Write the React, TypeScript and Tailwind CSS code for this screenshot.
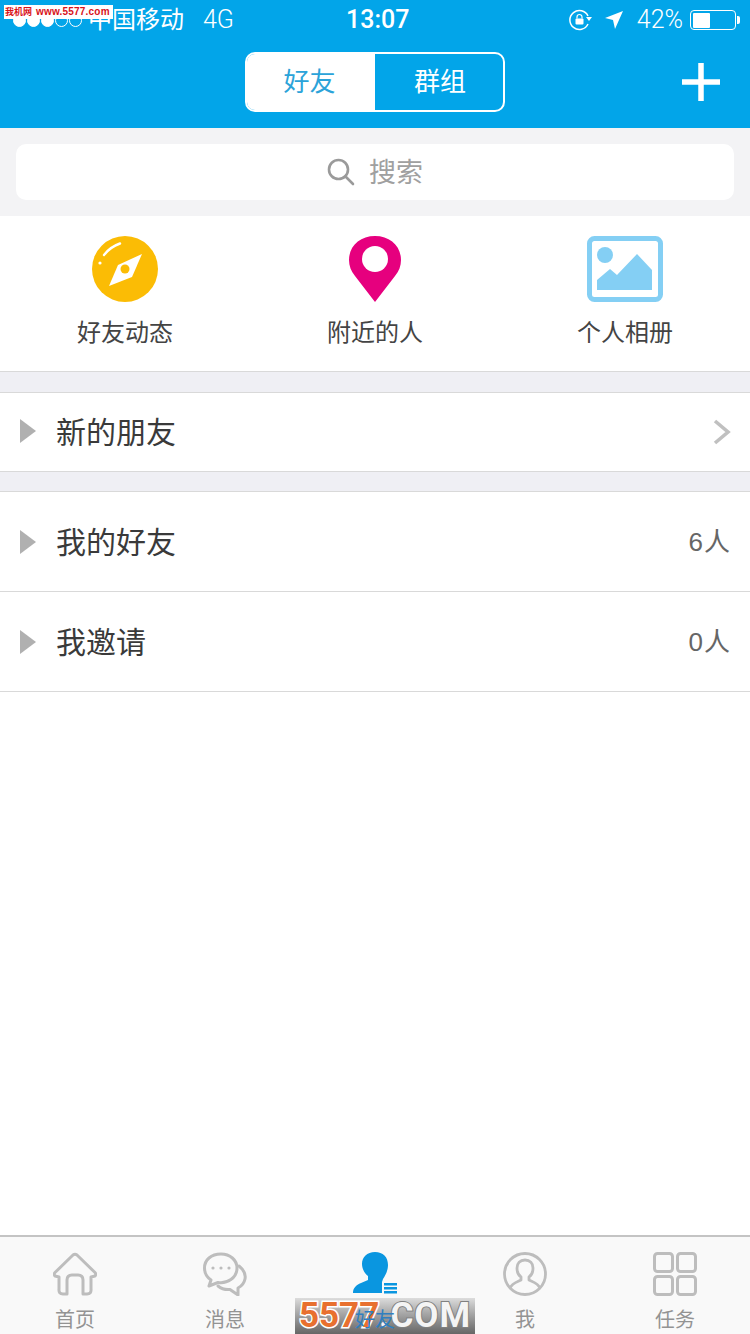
import React from 'react';

const sans = "font-['Liberation_Sans','Noto_Sans_CJK_SC',sans-serif]";
const latin = "font-['Roboto','Noto_Sans_CJK_SC',sans-serif]";

const Triangle = () => (
  <svg width="18" height="26" viewBox="0 0 18 26" className="mb-[2px] shrink-0">
    <path d="M1 1 L17 13 L1 25 Z" fill="#b0b0b0" />
  </svg>
);

const Chevron = () => (
  <svg width="18" height="26" viewBox="0 0 18 26">
    <path d="M2 2 L15 13 L2 24" fill="none" stroke="#c0c0c0" strokeWidth="3.6" />
  </svg>
);

const Compass = () => (
  <svg width="66" height="66" viewBox="0 0 66 66">
    <circle cx="33" cy="33" r="33" fill="#fbbc05" />
    <path d="M12 19 Q18 11 28 7.500" fill="none" stroke="#fff" strokeWidth="2.400" strokeLinecap="round" />
    <circle cx="8" cy="27" r="1.600" fill="#fff" />
    <path d="M50 18 L40 41 L17 50 L26 29 Z" fill="#fff" />
    <circle cx="33" cy="33" r="4.500" fill="#fbbc05" />
  </svg>
);

const Pin = () => (
  <svg width="52" height="66" viewBox="0 0 52 66">
    <path d="M26 0 C11 0 0 10 0 24 C0 30 2 35 6 40 L26 66 L46 40 C50 35 52 30 52 24 C52 10 41 0 26 0 Z" fill="#e6007e" />
    <circle cx="26" cy="23" r="13" fill="#fff" />
  </svg>
);

const Album = () => (
  <svg width="76" height="66" viewBox="0 0 76 66">
    <rect x="2.500" y="2.500" width="71" height="61" rx="5" fill="#fff" stroke="#84cff4" strokeWidth="5" />
    <circle cx="18" cy="19" r="8" fill="#84cff4" />
    <path d="M10 54 L10 44 L23 33 L30 39 L50 18 L65 34 L65 54 Z" fill="#84cff4" />
  </svg>
);

const HomeIcon = () => (
  <svg width="44" height="44" viewBox="0 0 44 44" fill="none" stroke="#bdbdbd" strokeWidth="3" strokeLinejoin="round" strokeLinecap="round">
    <path d="M10 42 Q5.500 42 6 37 L6 25 L2 24 Q0.500 22 2 20.500 L20 3 Q22 1.500 24 3 L42 20.500 Q43.500 22 42 24 L38 25 L38 37 Q38.500 42 34 42 L30 42 L30 28 Q30 23 25 23 L19 23 Q14 23 14 28 L14 42 Z" />
  </svg>
);

const ChatIcon = () => (
  <svg width="44" height="44" viewBox="0 0 44 44" fill="none" stroke="#bdbdbd" strokeWidth="3" strokeLinejoin="round" strokeLinecap="round">
    <path d="M18 2 C8 2 1.500 8 1.500 16 C1.500 22 5 26 8 28 L6 34 L15 30.500 C24 32 34 26 34 16 C34 8 27 2 18 2 Z" />
    <path d="M36 14 C41 18 43 22 42 27 C41 32 37 35 35 36 L35 43 L27 37.500 C22 38 18 36.500 15 34" />
    <circle cx="10" cy="16" r="1.600" fill="#bdbdbd" stroke="none" />
    <circle cx="18" cy="16" r="1.600" fill="#bdbdbd" stroke="none" />
    <circle cx="26" cy="16" r="1.600" fill="#bdbdbd" stroke="none" />
  </svg>
);

const FriendIcon = () => (
  <svg width="46" height="44" viewBox="0 0 46 44">
    <path d="M23 0 C31 0 36 5 36 13 C36 19 33 24 31 27 L30 30 V41 H1 C1 36 4 33 9 31 L16 28 L16 24 C12 21 10 16 10 12 C10 5 15 0 23 0 Z" fill="#0a96e0" />
    <rect x="32" y="31" width="13" height="2.500" fill="#0a96e0" />
    <rect x="32" y="35" width="13" height="2.500" fill="#0a96e0" />
    <rect x="32" y="39" width="13" height="2.500" fill="#0a96e0" />
  </svg>
);

const MeIcon = () => (
  <svg width="44" height="44" viewBox="0 0 44 44" fill="none" stroke="#bdbdbd" strokeWidth="2.800" strokeLinejoin="round">
    <circle cx="22" cy="22" r="20.500" />
    <path d="M7 36 C9 31 14 30 18 28 L18 25 C15 23 14 19 14 16 C14 11 17 8 22 8 C27 8 30 11 30 16 C30 19 29 23 26 25 L26 28 C30 30 35 31 37 36" />
  </svg>
);

const GridIcon = () => (
  <svg width="44" height="44" viewBox="0 0 44 44" fill="none" stroke="#bdbdbd" strokeWidth="3">
    <rect x="1.500" y="1.500" width="18" height="18" rx="3" />
    <rect x="24.500" y="1.500" width="18" height="18" rx="3" />
    <rect x="1.500" y="24.500" width="18" height="18" rx="3" />
    <rect x="24.500" y="24.500" width="18" height="18" rx="3" />
  </svg>
);

const StatusBar = () => (
  <div className={`relative flex h-10 items-center justify-between text-white ${latin}`}>
    <div className="flex items-center pl-[13px]">
      <div className="flex gap-[1px]">
        {[1, 1, 1, 0, 0].map((on, i) => (
          <span key={i} className={`h-[13px] w-[13px] rounded-full border border-white ${on ? 'bg-white' : ''}`} />
        ))}
      </div>
      <span className="ml-[6px] text-[24px]">中国移动</span>
      <span className="ml-[19px] text-[25px] font-light">4G</span>
    </div>
    <span className="absolute left-[346px] top-[4px] text-[25px] font-medium leading-[32px]">13:07</span>
    <div className="flex items-center pr-[10px]">
      <svg width="24" height="22" viewBox="0 0 24 22" fill="none" stroke="#fff" strokeWidth="1.500">
        <path d="M19 15 A9.500 9.500 0 1 1 19 7" />
        <path d="M17 8 L23 8 L20 12 Z" fill="#fff" stroke="none" />
        <rect x="6.500" y="9.500" width="8" height="6" rx="1" fill="#fff" stroke="none" />
        <path d="M8 9.500 V8 A2.500 2.500 0 0 1 13 8 V9.500" strokeWidth="1.200" />
      </svg>
      <svg width="20" height="20" viewBox="0 0 20 20" className="ml-[11px]">
        <path d="M19 1 L11 19 L9 10 L1 8 Z" fill="#fff" />
      </svg>
      <span className="ml-[13px] text-[25px] font-light">42%</span>
      <div className="ml-[7px] flex items-center">
        <div className="h-[20px] w-[46px] rounded-[4px] border border-white p-[1.500px]">
          <div className="h-full w-[17px] rounded-[1px] bg-white" />
        </div>
        <div className="ml-[1px] h-[8px] w-[3px] rounded-r-[2px] bg-white" />
      </div>
    </div>
  </div>
);

const shortcuts = [
  { icon: <Compass />, label: '好友动态' },
  { icon: <Pin />, label: '附近的人' },
  { icon: <Album />, label: '个人相册' },
];

const tabs = [
  { icon: <HomeIcon />, label: '首页' },
  { icon: <ChatIcon />, label: '消息' },
  { icon: <FriendIcon />, label: '好友', active: true },
  { icon: <MeIcon />, label: '我' },
  { icon: <GridIcon />, label: '任务' },
];

const App = () => {
  return (
    <div className={`relative flex h-[1334px] w-[750px] flex-col overflow-hidden bg-white ${sans}`}>
      <header className="h-[128px] shrink-0 bg-[#02a5e9]">
        <StatusBar />
        <div className="relative mt-3 flex justify-center">
          <div className="flex h-[60px] w-[260px] overflow-hidden rounded-[10px] border-2 border-white text-[26px]">
            <div className="flex w-[128px] items-center justify-center bg-white pr-[3px] text-[#2ba3d9]">好友</div>
            <div className="flex flex-1 items-center justify-center pl-[2px] text-white">群组</div>
          </div>
          <svg width="38" height="38" viewBox="0 0 38 38" className="absolute left-[682px] top-[11px]">
            <path d="M19 0 V38 M0 19 H38" stroke="#fff" strokeWidth="5.500" />
          </svg>
        </div>
      </header>

      <div className="h-[88px] shrink-0 bg-[#f3f3f5] px-4 py-4">
        <div className="flex h-14 items-center justify-center rounded-[10px] bg-white text-[27px] text-[#a0a0a0]">
          <svg width="28" height="28" viewBox="0 0 28 28" fill="none" stroke="#9a9a9a" strokeWidth="2.600" strokeLinecap="round">
            <circle cx="11.500" cy="11.500" r="9.500" />
            <path d="M18.500 18.500 L26 26" />
          </svg>
          <span className="ml-[14px] pt-[2px]">搜索</span>
        </div>
      </div>

      <div className="grid h-[156px] shrink-0 grid-cols-3 border-b border-[#d9d9d9] bg-white pt-5">
        {shortcuts.map((item) => (
          <div key={item.label} className="flex flex-col items-center">
            <div className="flex h-[66px] items-center">{item.icon}</div>
            <span className="mt-[14px] text-[24px] leading-[34px] text-[#444]">{item.label}</span>
          </div>
        ))}
      </div>

      <div className="h-[20px] shrink-0 bg-[#efeff4]" />

      <div className="flex h-[80px] shrink-0 items-center border-y border-[#d9d9d9] px-[19px]">
        <Triangle />
        <span className="ml-[19px] flex-1 text-[30px] text-[#3a3a3a]">新的朋友</span>
        <Chevron />
      </div>

      <div className="h-[19px] shrink-0 bg-[#efeff4]" />

      <div className="flex h-[101px] shrink-0 items-center border-y border-[#d9d9d9] pl-[19px] pr-[19px] pt-[2px]">
        <Triangle />
        <span className="ml-[19px] flex-1 text-[30px] text-[#3a3a3a]">我的好友</span>
        <span className="text-[26px] tracking-[1px] text-[#666]">6人</span>
      </div>
      <div className="flex h-[100px] shrink-0 items-center border-b border-[#d9d9d9] pl-[19px] pr-[19px] pt-[2px]">
        <Triangle />
        <span className="ml-[19px] flex-1 text-[30px] text-[#3a3a3a]">我邀请</span>
        <span className="text-[26px] tracking-[1px] text-[#666]">0人</span>
      </div>

      <div className="flex-1" />

      <nav className="grid h-[99px] shrink-0 grid-cols-5 border-t-2 border-[#c4c4c4] bg-[#f9f9f9]">
        {tabs.map((tab) => (
          <div key={tab.label} className="flex flex-col items-center pt-[15px]">
            <div className="flex h-[44px] items-center">{tab.icon}</div>
            <span className={`relative z-10 mt-[10px] text-[20px] leading-[28px] ${tab.active ? 'text-[#2f7fc0]' : 'text-[#939393]'}`}>{tab.label}</span>
          </div>
        ))}
      </nav>

      {/* watermarks */}
      <div className="absolute left-[4px] top-[5px] flex h-[14px] w-[109px] items-center whitespace-nowrap bg-white pl-[1px] font-bold text-[#d8121a]">
        <span className="text-[9px] leading-[14px]">我机网</span>
        <span className="ml-[4px] text-[10px] leading-[14px] tracking-[0.2px]">www.5577.com</span>
      </div>
      <div className="absolute left-[295px] top-[1298px] flex h-[36px] w-[180px] items-center justify-center whitespace-nowrap bg-gradient-to-b from-[#dcdcdc] to-[#666] font-['Roboto',sans-serif] text-[35px] font-bold leading-[36px]">
        <span className="text-[#e8702f] [-webkit-text-stroke:3px_#fff] [paint-order:stroke_fill]">5577</span>
        <span className="tracking-[1px] text-[#f4f4f4] [-webkit-text-stroke:2px_#808080] [paint-order:stroke_fill]">.COM</span>
      </div>
    </div>
  );
};

export default App;
